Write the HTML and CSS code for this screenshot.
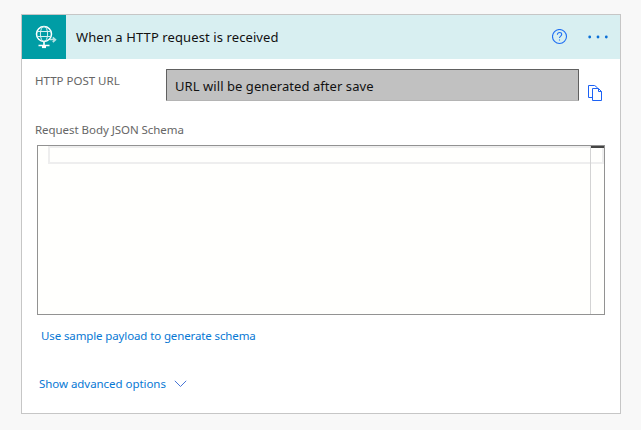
FILE: index.html
```html
<!DOCTYPE html>
<html lang="en">
<head>
<meta charset="utf-8">
<title>When a HTTP request is received</title>
<link rel="stylesheet" href="styles.css">
</head>
<body>
<main class="card">
  <header class="header">
    <div class="brand">
      <svg width="44" height="44" viewBox="0 0 44 44" fill="none" stroke="#d5eff0" stroke-width="1">
        <circle cx="22" cy="19" r="7.500" stroke="#fff" stroke-width="1.500"/>
        <ellipse cx="22" cy="19" rx="3.600" ry="7.500"/>
        <path d="M15.200 16.500h13.600M15.200 21.500h13.600"/>
        <path d="M22 26.600V31M16.500 30.500h11" stroke="#fff" stroke-width="1.600"/>
        <path d="M20 31.800h4" stroke="#fff" stroke-width="2.600"/>
        <path d="M28 24.500h4.500M30.800 22.300l2.600 2.400-2.600 2.400" stroke="#b5e2e4" stroke-width="1.700"/>
      </svg>
    </div>
    <h1 class="title">When a HTTP request is received</h1>
    <svg class="help" width="16" height="16" viewBox="0 0 16 16" fill="none" stroke="#1f6ff3" stroke-width="1.100">
      <circle cx="7.500" cy="7.500" r="7"/>
      <path d="M5.400 5.700c0-1.400.9-2.200 2.200-2.200s2.100.8 2.100 1.900c0 1.700-2.200 1.700-2.200 3.700M7.500 10.400v1.200"/>
    </svg>
    <svg class="more" width="20" height="4" viewBox="0 0 20 4" fill="#0a6fd6">
      <circle cx="1.700" cy="2" r="1.400"/><circle cx="10" cy="2" r="1.400"/><circle cx="18.300" cy="2" r="1.400"/>
    </svg>
  </header>
  <section class="url-row">
    <label class="label url-label">HTTP POST URL</label>
    <div class="url-box">URL will be generated after save</div>
    <svg class="copy" width="15" height="17" viewBox="0 0 15 17" fill="none" stroke="#1c62f5" stroke-width="1">
      <path d="M4.500 12.500h-4V.5h6.200l3 2.500"/>
      <path d="M4.500 3.500h6l3 3v9h-9zM10.500 3.500v3h3"/>
    </svg>
  </section>
  <section class="schema">
    <label class="label schema-label">Request Body JSON Schema</label>
    <div class="editor">
      <div class="current-line"></div>
      <div class="ruler"></div>
    </div>
  </section>
  <a class="link sample">Use sample payload to generate schema</a>
  <div class="advanced">
    <a class="link options">Show advanced options</a>
    <svg width="13" height="8" viewBox="0 0 13 8" fill="none" stroke="#4775d6"><path d="M.8.800l5.700 5.700L12.200.8"/></svg>
  </div>
</main>
</body>
</html>
```
FILE: styles.css
```css
* { box-sizing: border-box; }
body {
  margin: 0;
  padding: 14px 20px 16px 21px;
  background: #f8f8f8;
  font-family: "Noto Sans", "Open Sans", sans-serif;
  font-size: 11.5px;
}
.card {
  width: 600px;
  height: 400px;
  background: #fff;
  border: 1px solid #c6c6c6;
}
.header {
  display: flex;
  align-items: center;
  height: 44px;
  padding-right: 12px;
  background: #d8eff1;
}
.brand { width: 44px; height: 44px; background: #009da5; }
.brand svg { display: block; }
.title {
  flex: 1;
  margin: 0 0 0 10px;
  font-size: 13px;
  font-weight: 400;
  line-height: 20px;
  letter-spacing: 0.1px;
  color: #111;
}
.more { margin-left: 20px; }
.url-row {
  display: flex;
  align-items: flex-start;
  padding: 10px 0 0 13px;
}
.label { color: #666; line-height: 16px; white-space: nowrap; letter-spacing: -0.05px; }
.url-label { width: 131px; padding-top: 4px; letter-spacing: 0; }
.url-box {
  width: 413px;
  height: 32px;
  padding: 0 8px;
  border: 1px solid #606060;
  border-bottom: 1px solid #b4b4b4;
  border-radius: 1px;
  background: #c1c1c1;
  color: #111;
  font-size: 13px;
  line-height: 32px;
  letter-spacing: 0.06px;
}
.copy { margin: 16px 0 0 9px; }
.schema { padding: 20px 15px 0 13px; }
.schema-label { display: block; height: 23px; }
.editor {
  display: flex;
  height: 170px;
  width: 568px;
  margin-left: 2px;
  padding-left: 10px;
  border: 1px solid #929292;
  background: #fffffd;
}
.current-line {
  width: 542px;
  height: 18px;
  border: 2px solid #eee;
  border-right: 0;
}
.ruler {
  width: 14px;
  border-left: 1px solid #d3d3d3;
  background:
    linear-gradient(#444, #444) 0 0 / 100% 2px no-repeat,
    linear-gradient(#eee, #eee) 0 16px / 100% 2px no-repeat,
    linear-gradient(#eee, #eee) 100% 0 / 2px 18px no-repeat;
}
.link { color: #0878d4; line-height: 16px; white-space: nowrap; letter-spacing: -0.12px; }
.options { letter-spacing: -0.05px; }
.sample { display: block; margin: 13px 0 0 19px; }
.advanced {
  display: flex;
  align-items: center;
  gap: 8px;
  margin: 32px 0 0 17px;
}
```
